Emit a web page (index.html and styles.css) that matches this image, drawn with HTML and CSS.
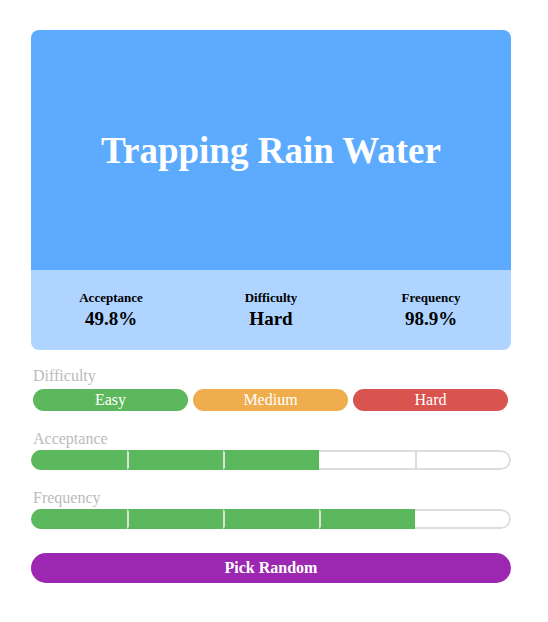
FILE: index.html
```html
<!DOCTYPE html>
<html>
<head>
<meta charset="utf-8">
<link rel="stylesheet" href="styles.css">
</head>
<body>
<div class="app">
  <div class="card">
    <div class="card-top"><h1 class="title">Trapping Rain Water</h1></div>
    <div class="card-stats">
      <div class="stat"><div class="stat-label">Acceptance</div><div class="stat-value">49.8%</div></div>
      <div class="stat"><div class="stat-label">Difficulty</div><div class="stat-value">Hard</div></div>
      <div class="stat"><div class="stat-label">Frequency</div><div class="stat-value">98.9%</div></div>
    </div>
  </div>

  <div class="section section-diff">
    <div class="label">Difficulty</div>
    <div class="diff-row">
      <div class="diff easy">Easy</div>
      <div class="diff medium">Medium</div>
      <div class="diff hard">Hard</div>
    </div>
  </div>

  <div class="section">
    <div class="label">Acceptance</div>
    <div class="bar">
      <div class="seg on"></div><div class="seg on"></div><div class="seg on"></div><div class="seg"></div><div class="seg"></div>
    </div>
  </div>

  <div class="section">
    <div class="label">Frequency</div>
    <div class="bar">
      <div class="seg on"></div><div class="seg on"></div><div class="seg on"></div><div class="seg on"></div><div class="seg"></div>
    </div>
  </div>

  <button class="pick">Pick Random</button>
</div>
</body>
</html>
```
FILE: styles.css
```css
html, body { margin: 0; padding: 0; background: #fff; }
body { font-family: "Liberation Serif", "Times New Roman", serif; }
.app { width: 480px; padding: 30px 0 0 31px; }
.card { border-radius: 8px; overflow: hidden; }
.card-top {
  height: 240px; background: #5cabff;
  display: flex; align-items: center; justify-content: center;
}
.title { margin: 0; color: #fff; font-size: 37px; font-weight: bold; }
.card-stats {
  height: 80px; box-sizing: border-box; padding-top: 21px; background: #aed4ff;
  display: grid; grid-template-columns: 1fr 1fr 1fr; align-content: start;
}
.stat { text-align: center; color: #000; font-weight: bold; }
.stat-label { font-size: 13px; line-height: 14px; }
.stat-value { font-size: 19px; line-height: 22px; margin-top: 3px; }
.section { margin-top: 7px; }
.section-diff { margin-top: 17px; }
.label { color: #bbb; font-size: 16px; line-height: 18px; margin-left: 2px; }
.diff-row { display: flex; gap: 5px; padding: 0 3px 0 2px; margin-top: 4px; }
.diff {
  flex: 1; height: 22px; line-height: 22px; border-radius: 11px;
  color: #fff; text-align: center; font-size: 16px;
}
.easy { background: #5cb85c; }
.medium { background: #f0ad4e; }
.hard { background: #d9534f; }
.section + .section { margin-top: 19px; }
.section-diff + .section { margin-top: 19px; }
.bar {
  margin-top: 2px; height: 20px; border-radius: 10px; overflow: hidden;
  display: flex; box-sizing: border-box;
}
.seg {
  flex: none; width: 20%; box-sizing: border-box;
  border-top: 2px solid #ddd; border-bottom: 2px solid #ddd;
  border-left: 2px solid #ddd;
}
.seg:first-child { border-left: none; }
.seg:last-child { border-right: 2px solid #ddd; border-radius: 0 10px 10px 0; }
.seg.on { background: #5cb85c; border-top-color: #5cb85c; border-bottom-color: #5cb85c; }
.seg.on + .seg:not(.on) { border-left: none; }
.pick {
  display: block; width: 480px; height: 30px; margin-top: 24px;
  border: none; border-radius: 15px; background: #9c27b0; color: #fff;
  font-family: "Liberation Serif", "Times New Roman", serif;
  font-weight: bold; font-size: 16px; padding: 0;
}
```
